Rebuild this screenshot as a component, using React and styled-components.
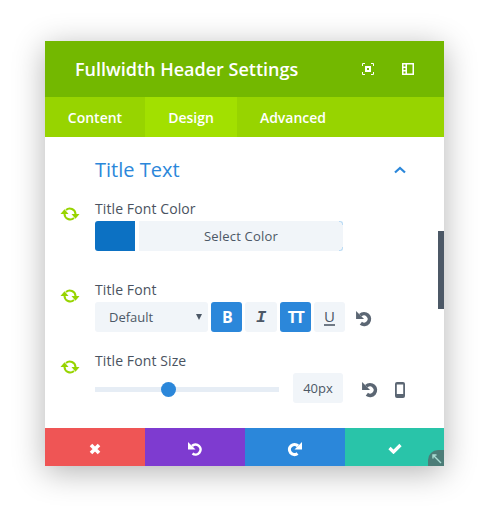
import React from "react";
import styled, { createGlobalStyle } from "styled-components";

const Global = createGlobalStyle`
  html, body { margin: 0; padding: 0; background: #fff; }
  body { font-family: "Open Sans", "Liberation Sans", sans-serif; }
`;

const Page = styled.div`
  width: 489px;
  height: 515px;
  padding: 41px 45px 49px;
  box-sizing: border-box;
  overflow: hidden;
`;

const Modal = styled.div`
  position: relative;
  width: 399px;
  height: 425px;
  display: flex;
  flex-direction: column;
  background: #fff;
  box-shadow: 0 6px 30px rgba(0, 0, 0, 0.3);
`;

const Header = styled.div`
  height: 56px;
  flex: none;
  display: flex;
  align-items: center;
  padding: 0 30px 0 30px;
  background: #73b800;
  color: #fff;
`;

const Title = styled.h1`
  flex: 1;
  margin: 0;
  font-size: 18px;
  font-weight: 600;
`;

const HeaderIcons = styled.div`
  display: flex;
  gap: 28px;
  align-items: center;

  svg { display: block; }
`;

const Tabs = styled.div`
  height: 40px;
  flex: none;
  display: flex;
  background: #97d400;
`;

const Tab = styled.div`
  width: ${(p) => p.$w}px;
  display: flex;
  align-items: center;
  justify-content: center;
  font-size: 14px;
  font-weight: 600;
  color: #fff;
  background: ${(p) => (p.$active ? "#a2e000" : "transparent")};
`;

const Body = styled.div`
  flex: 1;
  position: relative;
  overflow: hidden;
  padding: 19px 0 0 50px;
`;

const SectionHead = styled.div`
  display: flex;
  align-items: center;
  justify-content: space-between;
  height: 28px;
  padding-right: 38px;
  margin-bottom: 15px;
  color: #2b87da;

  svg { display: block; }
`;

const SectionTitle = styled.div`
  font-size: 20px;
  line-height: 28px;
`;

const Option = styled.div`
  position: relative;
  margin-bottom: ${(p) => p.$gap}px;
`;

const Sync = styled.div`
  position: absolute;
  left: -35px;
  top: ${(p) => p.$top}px;
  svg { display: block; }
`;

const Label = styled.div`
  font-size: 14px;
  font-weight: 500;
  line-height: 20px;
  letter-spacing: 0.1px;
  color: #4a5361;
  margin-bottom: 2px;
`;

const Controls = styled.div`
  display: flex;
  align-items: center;
`;

const Swatch = styled.div`
  width: 40px;
  height: 30px;
  background: #0c71c3;
  border-radius: 3px 0 0 3px;
  margin-right: 4px;
`;

const SelectColor = styled.div`
  position: relative;
  width: 204px;
  height: 30px;
  display: flex;
  align-items: center;
  justify-content: center;
  font-size: 13px;
  font-weight: 500;
  letter-spacing: 0.2px;
  color: #4c5866;
  background: #f1f5f9;
  border-radius: 0 3px 3px 0;
  box-sizing: border-box;

  &::before, &::after {
    content: "";
    position: absolute;
    right: 0;
    width: 3px;
    height: 3px;
    border-right: 1px solid #bcdcf5;
  }
  &::before {
    top: 0;
    border-top: 1px solid #bcdcf5;
    border-top-right-radius: 3px;
  }
  &::after {
    bottom: 0;
    border-bottom: 1px solid #bcdcf5;
    border-bottom-right-radius: 3px;
  }
`;

const Select = styled.div`
  width: 113px;
  height: 30px;
  display: flex;
  align-items: center;
  justify-content: space-between;
  box-sizing: border-box;
  padding: 0 6px 0 14px;
  font-size: 13px;
  font-weight: 500;
  color: #4c5866;
  background: #f1f5f9;
  border-radius: 3px;
  margin-right: 3px;
`;

const Arrow = styled.span`
  width: 0;
  height: 0;
  border-left: 3px solid transparent;
  border-right: 3px solid transparent;
  border-top: 6px solid #4c5866;
`;

const StyleBtn = styled.div`
  width: ${(p) => p.$w}px;
  height: 30px;
  display: flex;
  align-items: center;
  justify-content: center;
  margin-right: 3px;
  border-radius: 3px;
  font-size: 16px;
  font-weight: 700;
  letter-spacing: -1.5px;
  color: ${(p) => (p.$on ? "#fff" : "#4c5866")};
  background: ${(p) => (p.$on ? "#2b87da" : "#f1f5f9")};
`;

const ItalicGlyph = styled.span`
  font-family: "Liberation Mono", monospace;
  font-style: italic;
  font-size: 17px;
  font-weight: 700;
  letter-spacing: 0;
`;

const UnderGlyph = styled.span`
  font-size: 15px;
  font-weight: 400;
  letter-spacing: 0;
  line-height: 13px;
  padding: 0 0 1px;
  margin-top: 2px;
  border-bottom: 2px solid #6f7985;
`;

const ResetIcon = styled.span`
  display: block;
  color: #5b6673;
  margin-left: ${(p) => p.$ml}px;
  margin-top: 3px;
  svg { display: block; }
`;

const SliderTrack = styled.div`
  position: relative;
  width: 184px;
  height: 5px;
  margin: 3px 14px 0 0;
  background: #e6edf5;
`;

const Knob = styled.div`
  position: absolute;
  left: 66px;
  top: -5px;
  width: 15px;
  height: 15px;
  border-radius: 50%;
  background: #2b87da;
`;

const NumberBox = styled.div`
  width: 50px;
  height: 30px;
  display: flex;
  align-items: center;
  justify-content: center;
  font-size: 13px;
  color: #4c5866;
  background: #f1f5f9;
  border-radius: 3px;
`;

const Scrollbar = styled.div`
  position: absolute;
  right: 0;
  top: 94px;
  width: 6px;
  height: 78px;
  background: #4c5866;
`;

const Footer = styled.div`
  height: 38px;
  flex: none;
  display: grid;
  grid-template-columns: 100px 100px 100px 99px;
`;

const FootBtn = styled.div`
  display: flex;
  align-items: center;
  justify-content: center;
  padding-top: 3px;
  box-sizing: border-box;
  background: ${(p) => p.$bg};
  color: #fff;
  svg { display: block; }
`;

const Mirror = styled.span`
  display: block;
  transform: scaleX(-1);
`;

const Resize = styled.div`
  position: absolute;
  right: 0;
  bottom: 0;
  width: 16px;
  height: 16px;
  border-radius: 10px 0 0 0;
  background: #4c7d78;
  svg { display: block; margin: 4px 0 0 4px; }
`;

const SyncIcon = () => (
  <svg width="20" height="16" viewBox="0 0 20 16" fill="none">
    <path d="M6 4A5.700 5.700 0 0 1 15.500 8" stroke="#97d400" strokeWidth="2" />
    <path d="M14 12A5.700 5.700 0 0 1 4.500 8" stroke="#97d400" strokeWidth="2" />
    <path d="M4.500 3.300L.5 8h8z" fill="#97d400" />
    <path d="M15.500 12.700L11.500 8h8z" fill="#97d400" />
  </svg>
);

const Undo = ({ size = 17, color = "currentColor", weight = 3.4 }) => (
  <svg width={size} height={size} viewBox="0 0 16 16" fill="none">
    <path d="M5 5A5 5 0 1 1 5.500 12.500" stroke={color} strokeWidth={weight} />
    <path d="M1 1v7.500h7.500z" fill={color} />
  </svg>
);

const App = () => (
  <>
    <Global />
    <Page>
      <Modal>
        <Header>
          <Title>Fullwidth Header Settings</Title>
          <HeaderIcons>
            <svg width="12" height="12" viewBox="0 0 12 12" fill="none" stroke="#fff" strokeWidth="1">
              <path d="M.5 3V.5H3M9 .5h2.500V3M11.500 9v2.500H9M3 11.500H.5V9" />
              <rect x="4" y="4" width="4" height="4" strokeWidth="2" />
            </svg>
            <svg width="12" height="12" viewBox="0 0 12 12">
              <path fillRule="evenodd" fill="#fff" d="M0 0h12v12H0zM1.500 1.500v2h2v-2zM1.500 5v2h2V5zM1.500 8.500v2h2v-2zM5 1.500v9h5.500v-9z" />
            </svg>
          </HeaderIcons>
        </Header>
        <Tabs>
          <Tab $w={100}>Content</Tab>
          <Tab $w={92} $active>Design</Tab>
          <Tab $w={112}>Advanced</Tab>
        </Tabs>
        <Body>
          <SectionHead>
            <SectionTitle>Title Text</SectionTitle>
            <svg width="12" height="8" viewBox="0 0 12 8" fill="none" stroke="#2b87da" strokeWidth="2.200">
              <path d="M1 6.500l5-4.500 5 4.500" />
            </svg>
          </SectionHead>
          <Option $gap={29}>
            <Sync $top={7}><SyncIcon /></Sync>
            <Label>Title Font Color</Label>
            <Controls>
              <Swatch />
              <SelectColor>Select Color</SelectColor>
            </Controls>
          </Option>
          <Option $gap={19}>
            <Sync $top={8}><SyncIcon /></Sync>
            <Label>Title Font</Label>
            <Controls>
              <Select>Default<Arrow /></Select>
              <StyleBtn $w={31} $on>B</StyleBtn>
              <StyleBtn $w={32}><ItalicGlyph>I</ItalicGlyph></StyleBtn>
              <StyleBtn $w={31} $on>TT</StyleBtn>
              <StyleBtn $w={31}><UnderGlyph>U</UnderGlyph></StyleBtn>
              <ResetIcon $ml={7}><Undo /></ResetIcon>
            </Controls>
          </Option>
          <Option $gap={0}>
            <Sync $top={8}><SyncIcon /></Sync>
            <Label>Title Font Size</Label>
            <Controls>
              <SliderTrack><Knob /></SliderTrack>
              <NumberBox>40px</NumberBox>
              <ResetIcon $ml={18}><Undo /></ResetIcon>
              <ResetIcon $ml={17}>
                <svg width="10" height="16" viewBox="0 0 10 16">
                  <path fillRule="evenodd" fill="currentColor" d="M2 0h6a2 2 0 0 1 2 2v12a2 2 0 0 1-2 2H2a2 2 0 0 1-2-2V2a2 2 0 0 1 2-2zM1.800 2.500v9.500h6.400V2.500z" />
                </svg>
              </ResetIcon>
            </Controls>
          </Option>
          <Scrollbar />
        </Body>
        <Footer>
          <FootBtn $bg="#ef5555">
            <svg width="12" height="12" viewBox="0 0 12 12" stroke="#fff" strokeWidth="3.600" fill="none">
              <path d="M2 2l8 8M10 2l-8 8" />
            </svg>
          </FootBtn>
          <FootBtn $bg="#7e3bd0"><Undo size={16} color="#fff" weight={2.600} /></FootBtn>
          <FootBtn $bg="#2b87da">
            <Mirror><Undo size={16} color="#fff" weight={3.200} /></Mirror>
          </FootBtn>
          <FootBtn $bg="#29c4a9">
            <svg width="14" height="11" viewBox="0 0 14 11" stroke="#fff" strokeWidth="3.200" fill="none">
              <path d="M1.500 5l4 4 7-7" />
            </svg>
          </FootBtn>
        </Footer>
        <Resize>
          <svg width="10" height="10" viewBox="0 0 10 10" stroke="#a9dcd3" strokeWidth="1.400" fill="none">
            <path d="M1 1l8 8M1 4.500V1h3.500" />
          </svg>
        </Resize>
      </Modal>
    </Page>
  </>
);

export default App;
